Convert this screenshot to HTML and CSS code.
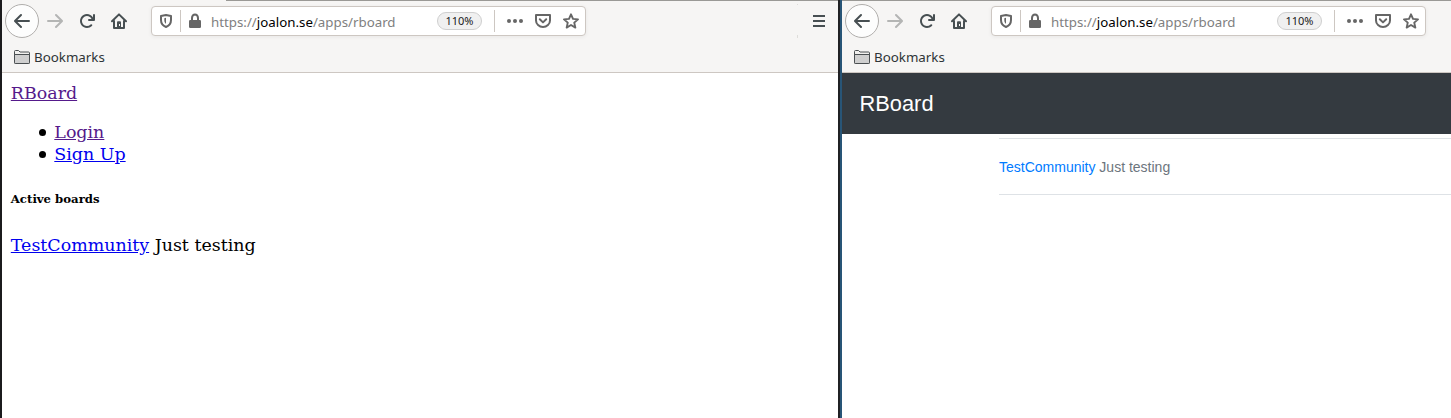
FILE: index.html
```
<!DOCTYPE html>
<html lang="en">
<head>
<meta charset="utf-8">
<title>RBoard</title>
<link rel="stylesheet" href="styles.css">
</head>
<body>
<svg class="defs" width="0" height="0">
  <symbol id="arrow" viewBox="0 0 16 16"><path fill="currentColor" d="M15 7H3.414l4.293-4.293a1 1 0 0 0-1.414-1.414l-6 6a1 1 0 0 0 0 1.414l6 6a1 1 0 0 0 1.414-1.414L3.414 9H15a1 1 0 0 0 0-2z"/></symbol>
  <symbol id="reload" viewBox="0 0 16 16"><path fill="currentColor" d="M15 1a1 1 0 0 0-1 1v2.418A6.995 6.995 0 1 0 8 15a6.954 6.954 0 0 0 4.950-2.050 1 1 0 0 0-1.414-1.414A5.019 5.019 0 1 1 12.549 6H10a1 1 0 0 0 0 2h5a1 1 0 0 0 1-1V2a1 1 0 0 0-1-1z"/></symbol>
  <symbol id="home" viewBox="0 0 16 16"><g fill="none" stroke="currentColor" stroke-width="2" stroke-linecap="round" stroke-linejoin="round"><path d="M1 8.200L8 1.400l7 6.800M3 8v7h10V8"/></g><path fill="currentColor" d="M6 9.200a1 1 0 0 1 1-1h2a1 1 0 0 1 1 1V15H6z"/><rect x="8" y="11" width="1" height="2" fill="#f6f5f4"/></symbol>
  <symbol id="shield" viewBox="0 0 16 16"><path fill="none" stroke="currentColor" stroke-width="2" stroke-linejoin="round" d="M8 2L13 3.100V7c0 3.600-1.800 5.700-5 7C4.800 12.700 3 10.600 3 7V3.100z"/><path fill="currentColor" d="M8 4.800v6.200C6.800 9.800 6.300 8.800 6.300 7V5.200z"/></symbol>
  <symbol id="lock" viewBox="0 0 16 16"><rect x="2" y="7" width="12" height="8" rx="1.300" fill="currentColor"/><path fill="none" stroke="currentColor" stroke-width="2" d="M5 8V5a3 3.500 0 0 1 6 0v3"/></symbol>
  <symbol id="dots" viewBox="0 0 16 16"><g fill="currentColor"><circle cx="2" cy="8" r="2"/><circle cx="8" cy="8" r="2"/><circle cx="14" cy="8" r="2"/></g></symbol>
  <symbol id="pocket" viewBox="0 0 16 16"><g fill="none" stroke="currentColor" stroke-width="2" stroke-linecap="round" stroke-linejoin="round"><path d="M1 2h14V7.500a7 6.500 0 0 1-14 0z"/><path d="M4.800 6.300L8 9.400l3.200-3.100"/></g></symbol>
  <symbol id="star" viewBox="0 0 16 16"><path fill="none" stroke="currentColor" stroke-width="1.900" stroke-linejoin="round" d="M8 1.300l2 4.600 5 .45-3.750 3.300 1.100 4.950L8 12l-4.350 2.600 1.100-4.950L1 6.350l5-.45z"/></symbol>
  <symbol id="folder" viewBox="0 0 16 14"><path fill="#f1f0ee" stroke="#4a4f51" d="M.5 12.500v-11q0-1 1-1h3l1.500 1.500h8.500q1 0 1 1v9.500q0 1-1 1h-13q-1 0-1-1z"/><path fill="#cfcfcf" stroke="#4a4f51" d="M.5 4.500h15v8q0 1-1 1h-13q-1 0-1-1z"/></symbol>
  <symbol id="menu" viewBox="0 0 16 16"><path stroke="currentColor" stroke-width="2" d="M2 3h12M2 8h12M2 13h12"/></symbol>
</svg>
<div class="desktop">
  <section class="window window-left">
    <header class="chrome">
      <div class="tab-edge tab-edge-inset"></div>
      <div class="toolbar">
        <span class="back"><svg class="icon"><use href="#arrow"/></svg></span>
        <svg class="icon forward"><use href="#arrow"/></svg>
        <svg class="icon"><use href="#reload"/></svg>
        <svg class="icon"><use href="#home"/></svg>
        <div class="urlbar">
          <svg class="icon"><use href="#shield"/></svg>
          <i class="divider"></i>
          <svg class="icon"><use href="#lock"/></svg>
          <span class="url">https://<b>joalon.se</b>/apps/rboard</span>
          <span class="zoom">110%</span>
          <i class="divider"></i>
          <svg class="icon"><use href="#dots"/></svg>
          <svg class="icon"><use href="#pocket"/></svg>
          <svg class="icon"><use href="#star"/></svg>
        </div>
        <i class="menu-divider"></i>
        <svg class="icon"><use href="#menu"/></svg>
      </div>
      <div class="bookmarks"><svg class="folder"><use href="#folder"/></svg><span>Bookmarks</span></div>
    </header>
    <main class="plain">
      <a class="visited" href="#">RBoard</a>
      <ul>
        <li><a class="visited" href="#">Login</a></li>
        <li><a href="#">Sign Up</a></li>
      </ul>
      <h5>Active boards</h5>
      <p><a href="#">TestCommunity</a> Just testing</p>
    </main>
  </section>
  <section class="window window-right">
    <header class="chrome">
      <div class="tab-edge"></div>
      <div class="toolbar">
        <span class="back"><svg class="icon"><use href="#arrow"/></svg></span>
        <svg class="icon forward"><use href="#arrow"/></svg>
        <svg class="icon"><use href="#reload"/></svg>
        <svg class="icon"><use href="#home"/></svg>
        <div class="urlbar">
          <svg class="icon"><use href="#shield"/></svg>
          <i class="divider"></i>
          <svg class="icon"><use href="#lock"/></svg>
          <span class="url">https://<b>joalon.se</b>/apps/rboard</span>
          <span class="zoom">110%</span>
          <i class="divider"></i>
          <svg class="icon"><use href="#dots"/></svg>
          <svg class="icon"><use href="#pocket"/></svg>
          <svg class="icon"><use href="#star"/></svg>
        </div>
      </div>
      <div class="bookmarks"><svg class="folder"><use href="#folder"/></svg><span>Bookmarks</span></div>
    </header>
    <nav class="navbar">RBoard</nav>
    <main class="boards">
      <div class="board"><a href="#">TestCommunity</a> Just testing</div>
    </main>
  </section>
</div>
</body>
</html>
```
FILE: styles.css
```
* { box-sizing: border-box; }
body { margin: 0; overflow: hidden; background: #fff; }
.defs { display: block; width: 0; height: 0; }
.desktop { display: flex; width: 1451px; height: 418px; }
.window { flex: none; background: #fff; }
.window-left { width: 840px; border-left: 2px solid #1b1b1d; border-right: 2px solid #202124; }
.window-right { width: 611px; border-left: 2px solid #285577; }

.chrome { height: 73px; background: #f6f5f4; border-bottom: 1px solid #cdc7c2; font-family: "Noto Sans", sans-serif; color: #2e3436; }
.tab-edge { height: 1px; background: #9a9996; }
.tab-edge-inset { margin-left: 224px; }
.toolbar { display: flex; align-items: center; height: 40px; padding-left: 3px; }
.icon { flex: none; display: block; width: 16px; height: 16px; color: #474f52; }
.toolbar > .icon { margin-right: 16px; }
.back { flex: none; display: flex; align-items: center; justify-content: center; width: 34px; height: 34px; margin-right: 8px; border: 1px solid #b0aeac; border-radius: 50%; background: #fdfdfd; }
.toolbar > .forward { transform: scaleX(-1); color: #b4b5b4; }
.urlbar { flex: none; display: flex; align-items: center; width: 435px; height: 30px; margin-left: 8px; padding-left: 6px; background: #fff; border: 1px solid #cdc7c2; border-radius: 4px; box-shadow: 0 1px 4px rgba(0,0,0,.06); }
.urlbar .icon { color: #666; }
.urlbar .icon + .icon { margin-left: 12px; }
.divider { flex: none; width: 1px; height: 22px; margin: 0 6px; background: #cdc7c2; }
.zoom + .divider { margin: 0 12px; }
.url { flex: none; width: 226px; margin-left: 8px; padding-top: 2px; font-size: 13.300px; line-height: 20px; color: #808080; white-space: nowrap; }
.url b { font-weight: 400; color: #000; }
.zoom { flex: none; width: 45px; height: 18px; border: 1px solid #cfcfcf; border-radius: 9px; background: #f0f0f0; font-size: 11px; line-height: 16px; text-align: center; color: #1a1a1a; }
.menu-divider { width: 1px; height: 34px; margin: 0 13px 0 auto; background: linear-gradient(#deddda 1px, transparent 1px 31px, #deddda 31px); }
.toolbar > .menu-divider + .icon { margin-right: 11px; }
.bookmarks { display: flex; align-items: center; height: 31px; padding: 0 0 0 12px; font-size: 13.330px; line-height: 20px; }
.folder { width: 16px; height: 14px; margin-right: 4px; }

.plain { padding: 9px 8.800px; font: 17.450px/22px "DejaVu Serif", serif; color: #000; }
.plain a { color: #0000ee; }
.plain .visited { color: #551a8b; }
.plain ul { margin: 17px 0 0; padding-left: 43.500px; list-style: none; }
.plain li { display: flex; align-items: center; }
.plain li::before { content: ""; width: 7px; height: 7px; margin: 1px 8px 0 -15px; border-radius: 50%; background: #000; }
.plain h5 { margin: 26px 0 0; font-size: 11.700px; line-height: 16px; }
.plain p { margin: 27px 0 0; }

.navbar { height: 61px; padding-left: 17.600px; background: #343a40; color: #fff; font: 21.800px/61px "Liberation Sans", sans-serif; }
.boards { padding: 4px 0 0 157px; }
.board { height: 57px; border-top: 1px solid #dee2e6; border-bottom: 1px solid #dee2e6; color: #6c757d; font: 14px/56px "Liberation Sans", sans-serif; }
.board a { color: #007bff; text-decoration: none; }
```
